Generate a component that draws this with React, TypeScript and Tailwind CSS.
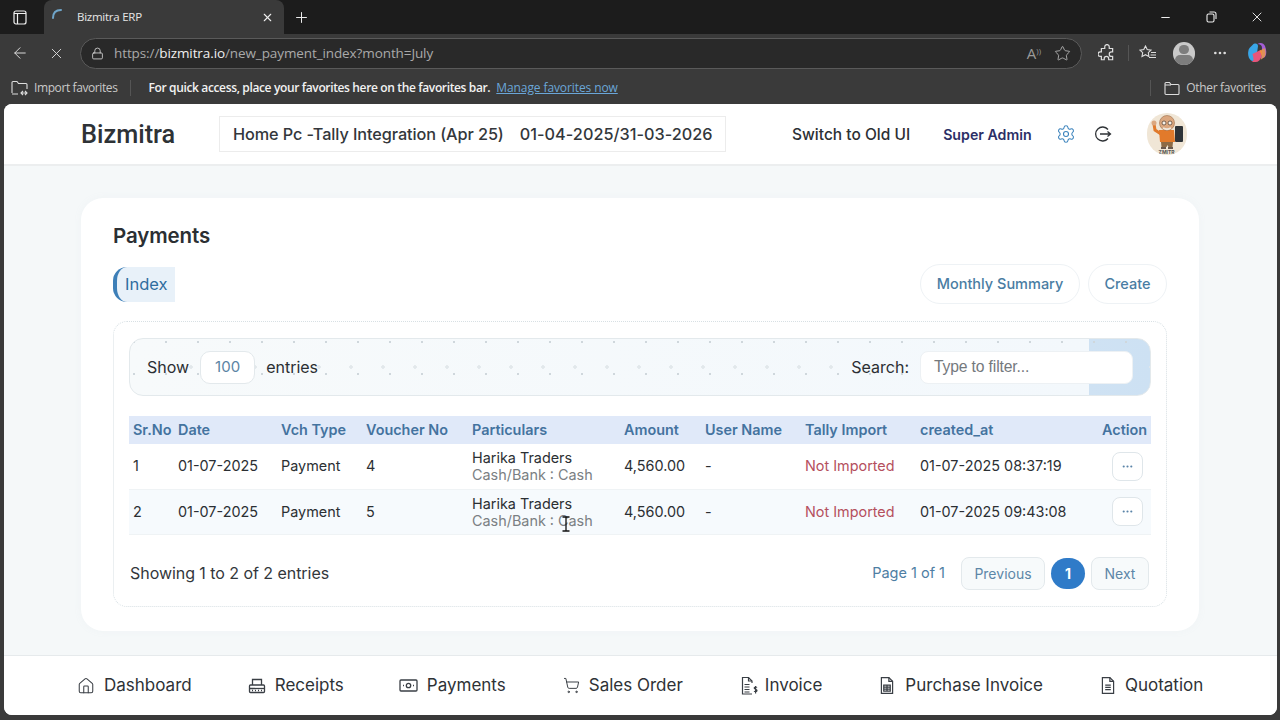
import React from 'react';
import { ArrowLeft, X, Plus, Lock, Star, Ellipsis, Minus, Settings, House, ShoppingCart } from 'lucide-react';

const inter = { fontFamily: 'Inter, "Noto Sans", sans-serif' };

const rows = [
  { sr: '1', voucher: '4', created: '01-07-2025 08:37:19', tint: 'bg-white' },
  { sr: '2', voucher: '5', created: '01-07-2025 09:43:08', tint: 'bg-[#f6fafd]' },
];

const columns = [
  { label: 'Sr.No', w: 'w-[45px]' },
  { label: 'Date', w: 'w-[103px]' },
  { label: 'Vch Type', w: 'w-[85px]' },
  { label: 'Voucher No', w: 'w-[106px]' },
  { label: 'Particulars', w: 'w-[152px]' },
  { label: 'Amount', w: 'w-[81px]' },
  { label: 'User Name', w: 'w-[100px]' },
  { label: 'Tally Import', w: 'w-[115px]' },
  { label: 'created_at', w: 'w-[182px]' },
  { label: 'Action', w: 'w-[53px]' },
];

const ReceiptIcon = () => (
  <svg width="18" height="16" viewBox="0 0 18 16" fill="none" stroke="#3a3f45" strokeWidth="1.300">
    <path d="M4.500 7V1.500H13.500V7" />
    <rect x="1.500" y="7" width="15" height="7.500" rx="1" />
    <path d="M1.500 10.500H16.500" />
    <path d="M4 12.500h1M7 12.500h1M10 12.500h1M13 12.500h1" />
  </svg>
);

const PaymentIcon = () => (
  <svg width="19" height="13" viewBox="0 0 19 13" fill="none" stroke="#3a3f45" strokeWidth="1.300">
    <rect x="1" y="1" width="17" height="11" rx="1" />
    <circle cx="9.500" cy="6.500" r="2.200" />
    <path d="M4 6.500h1M14 6.500h1" />
  </svg>
);

const InvoiceIcon = () => (
  <svg width="19" height="20" viewBox="0 0 19 20" fill="none" stroke="#3a3f45" strokeWidth="1.200">
    <path d="M12 7V5L8.500 1.500H2.500V18H12" />
    <path d="M8.500 1.500V5H12" />
    <path d="M4.500 8.500h5M4.500 11h5M4.500 13.500h5M4.500 16h5" />
    <path d="M17 11.500c-.5-.7-2.800-.8-2.800.6 0 1.500 2.800.9 2.800 2.500 0 1.400-2.300 1.300-2.900.5M15.600 10v7.500" />
  </svg>
);

const PurchaseIcon = () => (
  <svg width="14" height="19" viewBox="0 0 15 20" fill="none" stroke="#3a3f45" strokeWidth="1.300">
    <path d="M1.500 1.500H9.500L13.500 5.500V18.500H1.500Z" />
    <path d="M9.500 1.500V5.500H13.500" />
    <path d="M4 9.500h7v6.500H4ZM4 11.700h7M4 13.800h7M7.500 9.500V16" />
  </svg>
);

const QuoteIcon = () => (
  <svg width="14" height="19" viewBox="0 0 15 20" fill="none" stroke="#3a3f45" strokeWidth="1.300">
    <path d="M1.500 1.500H9.500L13.500 5.500V18.500H1.500Z" />
    <path d="M9.500 1.500V5.500H13.500" />
    <path d="M4.500 9.500h6M4.500 12h6M4.500 14.500h6" />
  </svg>
);

const nav = [
  { label: 'Dashboard', icon: <House size={18} strokeWidth={1.400} color="#3a3f45" />, box: 'gap-[9px]' },
  { label: 'Receipts', icon: <ReceiptIcon />, box: 'gap-[9px] ml-[56px]' },
  { label: 'Payments', icon: <PaymentIcon />, box: 'gap-[9px] ml-[55px]' },
  { label: 'Sales Order', icon: <ShoppingCart size={17} strokeWidth={1.400} color="#3a3f45" />, box: 'gap-[9px] ml-[57px]' },
  { label: 'Invoice', icon: <InvoiceIcon />, box: 'gap-[6px] ml-[57px]' },
  { label: 'Purchase Invoice', icon: <PurchaseIcon />, box: 'gap-[11px] ml-[58px]' },
  { label: 'Quotation', icon: <QuoteIcon />, box: 'gap-[10px] ml-[58px]' },
];

const Avatar = () => (
  <div className="relative w-[40px] h-[42px] rounded-full bg-[#f0e6d6] overflow-hidden">
    <svg width="40" height="42" viewBox="0 0 40 42">
      <path d="M7 11l1 6 6 4" fill="none" stroke="#e07a2c" strokeWidth="3" />
      <circle cx="7" cy="10" r="2.500" fill="#dba77f" />
      <path d="M12 17h15l1 12H13Z" fill="#e27a2b" />
      <rect x="28" y="13" width="8" height="16" rx="1" fill="#2e3338" />
      <circle cx="20" cy="10" r="7.500" fill="#dba77f" stroke="#9a6b4a" strokeWidth="0.600" />
      <circle cx="17" cy="10" r="2" fill="#f7f2ea" stroke="#4a3326" strokeWidth="0.700" />
      <circle cx="23" cy="10" r="2" fill="#f7f2ea" stroke="#4a3326" strokeWidth="0.700" />
      <path d="M16 15q4 2.500 8 0" stroke="#efe6da" strokeWidth="1.800" fill="none" />
      <path d="M14 29h12l-.5 5h-4l-1-2-1 2h-5Z" fill="#8c6a45" />
      <path d="M14 35h5M21 35h5" stroke="#3b2a20" strokeWidth="1.300" />
    </svg>
    <span className="absolute left-0 right-0 bottom-[0px] text-center text-[5px] leading-[6px] font-bold text-[#555]" style={inter}>ZMITR</span>
  </div>
);

export default function App() {
  return (
    <div className="w-[1280px] h-[720px] overflow-hidden bg-[#3a3a3a] flex flex-col relative" style={{ fontFamily: '"Open Sans", "Noto Sans", sans-serif' }}>
      {/* tab strip */}
      <div className="h-[34px] bg-[#1c1c1c] flex items-end shrink-0">
        <div className="w-[40px] h-[34px] flex items-center justify-center">
          <svg width="14" height="15" viewBox="0 0 14 15" fill="none" stroke="#f0f0f0" strokeWidth="1.200">
            <rect x="1" y="1" width="12" height="13" rx="2" />
            <path d="M1 3.500h12M4.500 3.500V14" />
          </svg>
        </div>
        <div className="w-[240px] h-[34px] ml-[4px] bg-[#3a3a3a] rounded-t-lg flex items-center pl-[5px] pr-[10px]">
          <svg width="16" height="16" viewBox="0 0 16 16" fill="none" className="mr-[12px] -mt-[7px]">
            <path d="M4 12 C4 7 7 4 12 4" stroke="#6fa5c9" strokeWidth="2" strokeLinecap="round" />
          </svg>
          <span className="text-[11.500px] text-[#e6e6e6] flex-1 tracking-[-0.25px]">Bizmitra ERP</span>
          <X size={13} color="#eee" />
        </div>
        <div className="h-[34px] w-[34px] flex items-center justify-center"><Plus size={17} color="#eee" strokeWidth={1.400} /></div>
        <div className="flex-1" />
        <div className="h-[34px] flex items-center pr-[15px]">
          <Minus size={13} color="#eee" />
          <svg width="11" height="12" viewBox="0 0 11 12" fill="none" stroke="#eee" strokeWidth="1.100" className="ml-[34px]">
            <rect x="1" y="3" width="7" height="8" rx="1.500" />
            <path d="M3.500 1h4.500a2 2 0 0 1 2 2v5" />
          </svg>
          <X size={16} color="#eee" strokeWidth={1.400} className="ml-[32px]" />
        </div>
      </div>
      {/* address bar */}
      <div className="h-[38px] flex items-center shrink-0">
        <div className="w-[40px] flex justify-center"><ArrowLeft size={18} color="#ddd" strokeWidth={1.300} /></div>
        <div className="w-[32px] flex justify-center"><X size={17} color="#ddd" strokeWidth={1.300} /></div>
        <div className="ml-[8px] w-[1002px] h-[31px] rounded-full bg-[#292929] border border-[#5a5a5a] flex items-center pl-[10px] pr-[10px]">
          <Lock size={13} color="#ddd" strokeWidth={1.500} />
          <div className="ml-[10px] flex-1 text-[13.500px] text-[#a9a9a9] tracking-[-0.1px]">
            https://<span className="text-[#f0f0f0]">bizmitra.io</span>/new_payment_index?month=July
          </div>
          <span className="text-[15px] leading-none text-[#9a9a9a] mr-[13px] flex items-start">A<span className="text-[8px] leading-[10px]">))</span></span>
          <Star size={17} color="#bbb" strokeWidth={1.200} />
        </div>
        <div className="ml-[16px] w-[18px] flex justify-center">
          <svg width="18" height="18" viewBox="0 0 16 16" fill="none" stroke="#ddd" strokeWidth="1.100">
            <path d="M6 2.500a2 2 0 0 1 4 0V4h3v3h-1a2 2 0 0 0 0 4h1v3H9.500v-1a2 2 0 0 0-4 0v1H3v-3H2a2 2 0 0 1 0-4h1V4h3Z" />
          </svg>
        </div>
        <div className="ml-[12px] w-[1px] h-[16px] bg-[#555]" />
        <div className="ml-[10px]">
          <svg width="18" height="16" viewBox="0 0 18 16" fill="none" stroke="#ddd" strokeWidth="1.100">
            <path d="M6.500 1l1.700 3.500 3.800.6-2.700 2.600.6 3.800-3.400-1.800L3 11.500l.7-3.800L1 5.100l3.800-.6Z" />
            <path d="M12 7.500h5M11.500 10h5.500M10 12.500h7" />
          </svg>
        </div>
        <div className="ml-[16px] w-[22px] h-[23px] rounded-full bg-[#c9c9c9] overflow-hidden flex flex-col items-center">
          <div className="w-[10px] h-[10px] rounded-full bg-[#7d7d7d] mt-[3px]" />
          <div className="w-[18px] h-[10px] rounded-full bg-[#7d7d7d] mt-[1px]" />
        </div>
        <div className="ml-[17px]"><Ellipsis size={16} color="#ddd" /></div>
        <div className="ml-[19px]">
          <svg width="21" height="22" viewBox="0 0 20 22">
            <path d="M5 3C7 1 10 1 10.500 4L9 15C8 19 5 20 3 18 0 15 0 9 2 6Z" fill="#39a6e8" />
            <path d="M10 2c3-2 6-1 7.500 2 1.500 4 2 8 0 11l-4 2 1-11c0-3-2-4-4.500-4Z" fill="#a45ed8" />
            <path d="M5 12l8-4c2 0 2 3 1 6-1 4-3 6-6 6H4c3-1 2-4 1-8Z" fill="#e8557a" />
            <path d="M12 9l5-3c1.500 3 1.500 7 0 9l-4 3c2-3 1-6-1-9Z" fill="#f5a623" opacity="0.700" />
          </svg>
        </div>
      </div>
      {/* favorites bar */}
      <div className="h-[32px] flex items-center shrink-0 text-[12px]">
        <svg width="18" height="16" viewBox="0 0 18 16" fill="none" stroke="#ddd" strokeWidth="1.100" className="ml-[11px]">
          <path d="M1 13V2.500a1 1 0 0 1 1-1h4l1.500 2H15a1 1 0 0 1 1 1V9M1 14h6M10 13h6M12 11l-2 2 2 2M14 11l2 2-2 2" />
        </svg>
        <span className="ml-[5px] text-[#c9c9c9] tracking-[-0.4px]">Import favorites</span>
        <div className="ml-[12px] w-[1px] h-[16px] bg-[#555]" />
        <span className="ml-[18px] text-[#f2f2f2] font-semibold tracking-[-0.36px]">For quick access, place your favorites here on the favorites bar.</span>
        <span className="ml-[6px] text-[#6aa6d8] underline tracking-[-0.1px]">Manage favorites now</span>
        <div className="flex-1" />
        <div className="w-[1px] h-[16px] bg-[#555] mr-[13px]" />
        <svg width="16" height="15" viewBox="0 0 16 15" fill="none" stroke="#ddd" strokeWidth="1.100">
          <path d="M1 12.500V2.500a1 1 0 0 1 1-1h3.500L7 3.500h7a1 1 0 0 1 1 1v8a1 1 0 0 1-1 1H2a1 1 0 0 1-1-1ZM1 4h6" />
        </svg>
        <span className="ml-[6px] mr-[14px] text-[#c9c9c9] tracking-[-0.3px]">Other favorites</span>
      </div>

      {/* page */}
      <div className="ml-[4px] mr-[3px] h-[611px] rounded-lg overflow-hidden bg-[#f5f8f9] flex flex-col relative" style={inter}>
        <header className="h-[62px] bg-white border-b-2 border-[#eceeef] flex items-center shrink-0">
          <div className="ml-[77px] w-[138px] text-[25.300px] text-[#2e3236] translate-y-[1px]" style={{ fontFamily: 'Roboto, sans-serif', fontWeight: 500 }}>Bizmitra</div>
          <div className="h-[36px] w-[507px] border border-[#ececec] flex items-center pl-[13px] text-[16.250px] font-medium text-[#33373b] whitespace-nowrap">
            <span className="tracking-[-0.08px]">Home Pc -Tally Integration (Apr 25)</span>
            <span className="ml-[16px] tracking-[0.02px]">01-04-2025/31-03-2026</span>
          </div>
          <div className="ml-[66px] text-[15.500px] font-medium text-[#2c3034] whitespace-nowrap translate-y-[1px]">Switch to Old UI</div>
          <div className="ml-[33px] text-[14.200px] font-semibold text-[#2b2f66] whitespace-nowrap translate-y-[1px]">Super Admin</div>
          <Settings size={20} strokeWidth={1.300} color="#3d84bd" className="ml-[24px]" />
          <svg width="18" height="18" viewBox="0 0 18 18" fill="none" stroke="#2e3236" strokeWidth="1.300" className="ml-[18px]">
            <path d="M14 4.500A7 7 0 1 0 14 13.500M6 9h10.500M13.500 6.500L16.500 9l-3 2.500" />
          </svg>
          <div className="ml-[35px]"><Avatar /></div>
        </header>

        <main className="flex-1 pl-[77px] pr-[78px] pt-[32px]">
          <section className="h-[433px] rounded-[22px] bg-white shadow-[0_0_8px_rgba(150,175,190,0.06)] px-[32px] pt-[25px]">
            <h1 className="text-[20.500px] leading-[26px] font-semibold text-[#2b2f33] tracking-[-0.1px]">Payments</h1>
            <div className="mt-[15px] h-[40px] flex items-center justify-between">
              <div className="h-[35px] w-[62px] bg-[#e8f1f9] rounded-l-[14px] border-l-[4px] border-[#3d7fb8] flex items-center pl-[8px] text-[16.500px] text-[#2f6d9f]">Index</div>
              <div className="flex gap-[8px]">
                <button className="h-[40px] w-[160px] rounded-full border border-[#eef2f5] text-[14.500px] font-medium text-[#4a7da3]">Monthly Summary</button>
                <button className="h-[40px] w-[79px] rounded-full border border-[#eef2f5] text-[14.500px] font-medium text-[#4a7da3]">Create</button>
              </div>
            </div>
            <div className="mt-[17px] h-[286px] rounded-[14px] border border-dotted border-[#d8e0e4] px-[15px] pt-[16px]">
              <div
                className="h-[58px] rounded-[14px] border border-[#e3e9ec] flex items-center justify-between pl-[17px] pr-[17px] bg-[radial-gradient(circle_at_4px_3px,#cfd7dc_1px,transparent_1.500px),radial-gradient(circle_at_29px_28px,#e2e8eb_1.500px,transparent_2px),linear-gradient(90deg,#f7fafb_0%,#f3f8fc_94%,#cfe2f3_94%,#cde1f3_100%)] [background-size:32px_32px,32px_32px,100%_100%]"
              >
                <div className="flex items-center text-[16px] text-[#2b2f33]">
                  <span>Show</span>
                  <div className="ml-[11px] w-[55px] h-[33px] rounded-[10px] border border-[#e3e9ec] bg-white flex items-center justify-center text-[#5b84a4] text-[15px]">100</div>
                  <span className="ml-[11px]">entries</span>
                </div>
                <div className="flex items-center text-[16px] text-[#2b2f33]">
                  <span>Search:</span>
                  <div className="ml-[11px] w-[213px] h-[33px] rounded-[8px] bg-white border border-[#edf1f4] flex items-center pl-[13px] text-[#74797d] text-[15.700px] tracking-[-0.15px]" style={{ fontFamily: '"Liberation Sans", Inter, sans-serif' }}>Type to filter...</div>
                </div>
              </div>
              <table className="mt-[20px] w-[1022px] table-fixed border-collapse text-[14.400px] text-[#2b2f33]">
                <thead>
                  <tr className="h-[28px] bg-[#e0e9f9]">
                    {columns.map((c) => (
                      <th key={c.label} className={`${c.w} pl-[4px] pb-[1px] text-left font-semibold text-[#44739f] whitespace-nowrap`}>{c.label}</th>
                    ))}
                  </tr>
                </thead>
                <tbody>
                  {rows.map((r) => (
                    <tr key={r.sr} className={`h-[45px] border-b border-[#eff3f5] ${r.tint}`}>
                      <td className="pl-[4px]">{r.sr}</td>
                      <td className="pl-[4px]">01-07-2025</td>
                      <td className="pl-[4px]">Payment</td>
                      <td className="pl-[4px]">{r.voucher}</td>
                      <td className="pl-[4px] leading-[17px] whitespace-nowrap">
                        <div>Harika Traders</div>
                        <div className="text-[#7b7f83]">Cash/Bank : Cash</div>
                      </td>
                      <td className="pl-[4px]">4,560.00</td>
                      <td className="pl-[4px]">-</td>
                      <td className="pl-[4px] text-[#b5505e] whitespace-nowrap">Not Imported</td>
                      <td className="pl-[4px] whitespace-nowrap">{r.created}</td>
                      <td className="pl-[14px]">
                        <div className="w-[31px] h-[29px] rounded-[8px] border border-[#dfe6ea] bg-white flex items-center justify-center">
                          <Ellipsis size={13} color="#5a84a8" strokeWidth={2} />
                        </div>
                      </td>
                    </tr>
                  ))}
                </tbody>
              </table>
              <div className="mt-[22px] h-[33px] flex items-center justify-between text-[16px] text-[#33373b]">
                <span className="pl-[1px] tracking-[-0.05px]">Showing 1 to 2 of 2 entries</span>
                <div className="flex items-center mr-[2px] text-[14px]">
                  <span className="text-[#4f7ea3] text-[14.500px]">Page 1 of 1</span>
                  <div className="ml-[16px] w-[84px] h-[33px] rounded-[8px] border border-[#e3e9ec] bg-[#f7fafb] flex items-center justify-center text-[#5d87a8]">Previous</div>
                  <div className="ml-[6px] w-[34px] h-[31px] rounded-full bg-[#2f7bc8] text-white font-bold flex items-center justify-center">1</div>
                  <div className="ml-[6px] w-[58px] h-[33px] rounded-[8px] border border-[#e3e9ec] bg-[#f7fafb] flex items-center justify-center text-[#5d87a8]">Next</div>
                </div>
              </div>
            </div>
          </section>
        </main>

        <footer className="h-[60px] bg-white border-t border-[#e6eaec] flex items-center pl-[73px] shrink-0">
          {nav.map((n) => (
            <div key={n.label} className={`flex items-center ${n.box} text-[17px] text-[#2e3236] whitespace-nowrap`}>
              {n.icon}
              <span>{n.label}</span>
            </div>
          ))}
        </footer>

        {/* text cursor over the second row */}
        <svg width="10" height="16" viewBox="0 0 10 16" fill="none" stroke="#111" strokeWidth="1.300" className="absolute left-[557px] top-[412px]">
          <path d="M1.500 1H8.500M5 1V15M1.500 15H8.500" />
        </svg>
      </div>
    </div>
  );
}
